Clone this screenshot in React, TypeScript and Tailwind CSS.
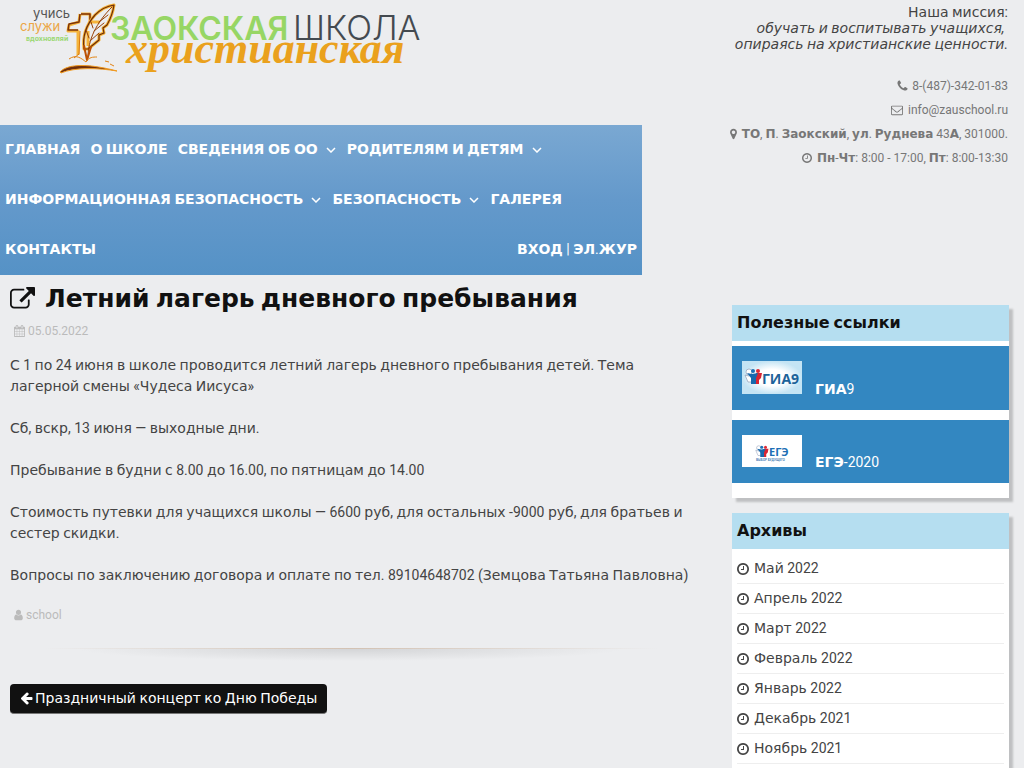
import type { ReactNode } from "react";

// Font Awesome 4 outlines, drawn on its 1792 unit grid
const icons = {
  phone: {
    box: "128 0 1536 1792",
    d: "M1600 1240q0 27-10 70.5t-21 68.5q-21 50-122 106-94 51-186 51-27 0-53-3.5t-57.5-12.5-47-14.5-55.5-20.5-49-18q-98-35-175-83-127-79-264-216t-216-264q-48-77-83-175-3-9-18-49t-20.5-55.5-14.5-47-12.5-57.5-3.5-53q0-92 51-186 56-101 106-122 25-11 68.5-21t70.5-10q14 0 21 3 18 6 53 76 11 19 30 54t35 63.5 31 53.5q3 4 17.5 25t21.5 35.5 7 28.5q0 20-28.5 50t-62 55-62 53-28.5 46q0 9 5 22.5t8.5 20.5 14 24 11.5 19q76 137 174 235t235 174q2 1 19 11.5t24 14 20.5 8.5 22.5 5q18 0 46-28.5t53-62 55-62 50-28.5q14 0 28.5 7t35.5 21.5 25 17.5q25 15 53.5 31t63.5 35 54 30q70 35 76 53 3 7 3 21z",
  },
  envelope: {
    box: "0 0 1792 1792",
    d: "M1664 1504v-768q-32 36-69 66-268 206-426 338-51 43-83 67t-86.5 48.5-102.5 24.5h-2q-48 0-102.5-24.5t-86.5-48.5-83-67q-158-132-426-338-37-30-69-66v768q0 13 9.5 22.5t22.5 9.5h1472q13 0 22.5-9.5t9.5-22.5zm0-1051v-24.5l-.5-13-3-12.5-5.5-9-9-7.5-14-2.5h-1472q-13 0-22.5 9.5t-9.5 22.5q0 168 147 284 193 152 401 317 6 5 35 29.5t46 37.5 44.5 31.5 50.5 27.5 43 9h2q20 0 43-9t50.5-27.5 44.5-31.5 46-37.5 35-29.5q208-165 401-317 54-43 100.5-115.5t46.5-131.5zm128-37v1088q0 66-47 113t-113 47h-1472q-66 0-113-47t-47-113v-1088q0-66 47-113t113-47h1472q66 0 113 47t47 113z",
  },
  marker: {
    box: "384 0 1024 1792",
    d: "M1152 640q0-106-75-181t-181-75-181 75-75 181 75 181 181 75 181-75 75-181zm256 0q0 109-33 179l-364 774q-16 33-47.5 52t-67.5 19-67.5-19-46.5-52l-365-774q-33-70-33-179 0-212 150-362t362-150 362 150 150 362z",
  },
  clock: {
    box: "128 0 1536 1792",
    d: "M1024 544v448q0 14-9 23t-23 9h-320q-14 0-23-9t-9-23v-64q0-14 9-23t23-9h224v-352q0-14 9-23t23-9h64q14 0 23 9t9 23zm416 352q0-148-73-273t-198-198-273-73-273 73-198 198-73 273 73 273 198 198 273 73 273-73 198-198 73-273zm224 0q0 209-103 385.5t-279.5 279.5-385.5 103-385.5-103-279.5-279.5-103-385.5 103-385.5 279.5-279.5 385.5-103 385.5 103 279.5 279.5 103 385.5z",
  },
  external: {
    box: "0 0 1792 1792",
    d: "M1408 928v320q0 119-84.5 203.5t-203.5 84.5h-832q-119 0-203.5-84.5t-84.5-203.5v-832q0-119 84.5-203.5t203.5-84.5h704q14 0 23 9t9 23v64q0 14-9 23t-23 9h-704q-66 0-113 47t-47 113v832q0 66 47 113t113 47h832q66 0 113-47t47-113v-320q0-14 9-23t23-9h64q14 0 23 9t9 23zm384-864v512q0 26-19 45t-45 19-45-19l-176-176-652 652q-10 10-23 10t-23-10l-114-114q-10-10-10-23t10-23l652-652-176-176q-19-19-19-45t19-45 45-19h512q26 0 45 19t19 45z",
  },
  calendar: {
    box: "64 0 1664 1792",
    d: "M192 1664h288v-288h-288v288zm352 0h320v-288h-320v288zm-352-352h288v-320h-288v320zm352 0h320v-320h-320v320zm-352-384h288v-288h-288v288zm736 736h320v-288h-320v288zm-384-736h320v-288h-320v288zm768 736h288v-288h-288v288zm-384-352h320v-320h-320v320zm-352-864v-288q0-13-9.5-22.5t-22.5-9.5h-64q-13 0-22.5 9.5t-9.5 22.5v288q0 13 9.5 22.5t22.5 9.5h64q13 0 22.5-9.5t9.5-22.5zm736 864h288v-320h-288v320zm-384-384h320v-288h-320v288zm384 0h288v-288h-288v288zm32-480v-288q0-13-9.5-22.5t-22.5-9.5h-64q-13 0-22.5 9.5t-9.5 22.5v288q0 13 9.5 22.5t22.5 9.5h64q13 0 22.5-9.5t9.5-22.5zm384-64v1280q0 52-38 90t-90 38h-1408q-52 0-90-38t-38-90v-1280q0-52 38-90t90-38h128v-96q0-66 47-113t113-47h64q66 0 113 47t47 113v96h384v-96q0-66 47-113t113-47h64q66 0 113 47t47 113v96h128q52 0 90 38t38 90z",
  },
  user: {
    box: "256 0 1280 1792",
    d: "M1536 1399q0 109-62.5 187t-150.5 78h-854q-88 0-150.5-78t-62.5-187q0-85 8.5-160.5t31.5-152 58.5-131 94-89 134.5-34.5q131 128 313 128t313-128q76 0 134.5 34.5t94 89 58.5 131 31.5 152 8.5 160.5zm-256-887q0 159-112.5 271.5t-271.5 112.5-271.5-112.5-112.5-271.5 112.5-271.5 271.5-112.5 271.5 112.5 112.5 271.5z",
  },
  arrow: {
    box: "64 0 1664 1792",
    d: "M1664 896v128q0 53-32.5 90.5t-84.5 37.5h-704l293 294q38 36 38 90t-38 90l-75 76q-37 37-90 37-52 0-91-37l-651-652q-37-37-37-90 0-52 37-91l651-650q38-38 91-38 52 0 90 38l75 74q38 38 38 91t-38 91l-293 293h704q52 0 84.5 37.5t32.5 90.5z",
  },
};

const Icon = ({ name, className }: { name: keyof typeof icons; className: string }) => (
  <svg viewBox={icons[name].box} fill="currentColor" className={`shrink-0 ${className}`} aria-hidden="true">
    <path d={icons[name].d} />
  </svg>
);

// Cyrillic runs are set in DejaVu Sans, digits, spaces and punctuation stay in Roboto
const T = ({ children, bold }: { children: string; bold?: boolean }) => (
  <span>
    {children.split(/([А-Яа-яЁё]+)/).map((part, i) =>
      i % 2 ? (
        <span key={i} className={bold ? "font-['DejaVu_Sans'] leading-none font-bold" : "font-['DejaVu_Sans'] leading-none"}>
          {part}
        </span>
      ) : (
        part
      )
    )}
  </span>
);

const menu = [
  { label: "ГЛАВНАЯ" },
  { label: "О ШКОЛЕ" },
  { label: "СВЕДЕНИЯ ОБ ОО", sub: true },
  { label: "РОДИТЕЛЯМ И ДЕТЯМ", sub: true },
  { label: "ИНФОРМАЦИОННАЯ БЕЗОПАСНОСТЬ", sub: true },
  { label: "БЕЗОПАСНОСТЬ", sub: true },
  { label: "ГАЛЕРЕЯ" },
  { label: "КОНТАКТЫ" },
];

const paragraphs = [
  "С 1 по 24 июня в школе проводится летний лагерь дневного пребывания детей. Тема лагерной смены «Чудеса Иисуса»",
  "Сб, вскр, 13 июня — выходные дни.",
  "Пребывание в будни с 8.00 до 16.00, по пятницам до 14.00",
  "Стоимость путевки для учащихся школы — 6600 руб, для остальных -9000 руб, для братьев и сестер скидки.",
  "Вопросы по заключению договора и оплате по тел. 89104648702 (Земцова Татьяна Павловна)",
];

const archives = [
  "Май 2022",
  "Апрель 2022",
  "Март 2022",
  "Февраль 2022",
  "Январь 2022",
  "Декабрь 2021",
  "Ноябрь 2021",
];

const Logo = () => (
  <svg viewBox="0 0 430 80" className="block h-20 w-[430px] max-w-full" role="img" aria-label="Заокская христианская школа">
    <text x="33" y="18" fontSize="13" fill="#555" fontFamily="Inter">учись</text>
    <text x="20" y="31" fontSize="13" fill="#eba544" fontFamily="Inter">служи</text>
    <text x="26" y="41" fontSize="7" fontWeight="700" fill="#9bd873" fontFamily="Inter">вдохновляй</text>
    {/* cross */}
    <g fill="none" strokeLinejoin="round">
      <path d="M81 14h9v8h10M80 14l-1 8-10 3-1 6h10v24M88 31v15" stroke="#f5b43c" strokeWidth="3" />
      <path d="M81 14h9v8M80 14l-1 8-10 2-1 6h10" stroke="#7d3208" strokeWidth="1.5" />
      <path d="M80 31l-1 23-5 4" stroke="#d9780b" strokeWidth="1" />
    </g>
    {/* quill */}
    <g fill="none" strokeLinecap="round" strokeLinejoin="round">
      <path d="M84 49c-2-15 3-25 11-34 6-6 12-9 19-10-1 7-3 13-7 20l-4 3 1 5-5 2v5l-11 9z" stroke="#f6b133" strokeWidth="3" />
      <path d="M84 49c-2-15 3-25 11-34 6-6 12-9 19-10-1 7-3 13-7 20l-4 3 1 5-5 2v5l-11 9z" stroke="#6b2b09" strokeWidth="1.2" />
      <path d="M88 57c0-17 8-34 24-50M90 41l9-8M94 31l10-8M99 22l9-7M89 38l-3-8M93 28l-2-6" stroke="#974008" strokeWidth="1" />
      <path d="M84 46l3 14 4-13" stroke="#bc5205" strokeWidth="2" />
    </g>
    <path d="M69 59c7-5 12-1 17 3 3-5 7-5 11-5M105 61l4 1M110 64l4 2" fill="none" stroke="#e38413" strokeWidth="1" />
    <path d="M60 72c8-9 31-8 57-1-18-3-42-4-56 2z" fill="#71300b" stroke="#f29b21" strokeWidth="1" />
    <text x="110" y="40" fontSize="32" fontWeight="600" fill="#97d665" fontFamily="Inter">ЗАОКСКАЯ</text>
    <text x="293" y="40" fontSize="34" fontWeight="300" fill="#444a50" fontFamily="Inter">ШКОЛА</text>
    <text x="126" y="63" fontSize="44" fontStyle="italic" fontWeight="700" fill="#eaa11d" fontFamily="Liberation Serif">христианская</text>
  </svg>
);

// the two little figures on the exam badges
const People = () => (
  <g>
    <circle cx="5" cy="4" r="3" fill="#fff" stroke="#8090ad" strokeWidth=".6" />
    <path d="M1 7q4 2 7 0l1 7H4z" fill="#fff" stroke="#8090ad" strokeWidth=".6" />
    <circle cx="14" cy="3" r="2" fill="#e02934" />
    <path d="M12 5h6l-1 5-2 2v4h-4z" fill="#d82533" />
    <circle cx="9" cy="3" r="2" fill="#1b70b5" />
    <path d="M3 5l5 1 6-1-2 5v6H7v-6z" fill="#1769ad" />
  </g>
);

const Gia = () => (
  <svg viewBox="0 0 60 33" className="h-[33px] w-[60px]" aria-hidden="true">
    <defs>
      <radialGradient id="gia">
        <stop offset="0.5" stopColor="#fff" />
        <stop offset="1" stopColor="#c4e4f4" />
      </radialGradient>
    </defs>
    <rect width="60" height="33" fill="url(#gia)" />
    <g transform="translate(2 7)">
      <People />
    </g>
    <text x="20" y="23" fontSize="14" fontWeight="700" fill="#1d6399" fontFamily="Open Sans">ГИА9</text>
  </svg>
);

const Ege = () => (
  <svg viewBox="0 0 60 32" className="h-8 w-[60px]" aria-hidden="true">
    <rect width="60" height="32" fill="#fff" />
    <g transform="translate(13 10) scale(.75)">
      <People />
    </g>
    <text x="27" y="21" fontSize="11" fontWeight="700" fill="#1d6fb5" fontFamily="Open Sans">ЕГЭ</text>
    <text x="14" y="26" fontSize="3" fontWeight="700" fill="#4a83b5" fontFamily="Open Sans">ВЫБОР БУДУЩЕГО</text>
  </svg>
);

const Widget = ({ title, children }: { title: string; children: ReactNode }) => (
  <section className="mb-[15px] bg-white shadow-[4px_4px_2px_#bfc0c2]">
    <h3 className="bg-[#b5def0] px-[5px] text-base leading-9 text-[#111]">
      <T bold>{title}</T>
    </h3>
    {children}
  </section>
);

const App = () => {
  return (
    <div className="flex min-h-screen w-full overflow-hidden bg-[#ecedef] font-[Roboto,sans-serif] text-sm text-[#444]">
      {/* Main column */}
      <div className="min-w-0 flex-1">
        <header className="h-[125px]">
          <a href="#" className="inline-block">
            <Logo />
          </a>
        </header>

        <nav className="mr-[88px] flex flex-wrap bg-linear-to-b from-[#7aa8d2] via-[#6499cb] to-[#5592c6] leading-[48px] text-white">
          {menu.map((item) => (
            <a key={item.label} href="#" className="flex items-center px-[5px] pb-[2px] whitespace-nowrap">
              <T bold>{item.label}</T>
              {item.sub && (
                <svg viewBox="0 0 10 6" className="mt-[2px] mr-px ml-2 h-[6px] w-[10px]" fill="none" stroke="currentColor" strokeWidth="1.5">
                  <path d="M1 1l4 4 4-4" />
                </svg>
              )}
            </a>
          ))}
          <a href="#" className="ml-auto px-[5px] pb-[2px] whitespace-nowrap">
            <T bold>ВХОД | ЭЛ.ЖУР</T>
          </a>
        </nav>

        <main className="pr-[38px] pl-[10px]">
          <h1 className="flex items-center gap-[10px] pt-2 text-[25px] leading-8 text-[#111]">
            <Icon name="external" className="h-[25px] w-[25px]" />
            <T bold>Летний лагерь дневного пребывания</T>
          </h1>
          <p className="mt-1 flex h-6 items-center gap-[3px] pl-1 text-xs text-[#bbb]">
            <Icon name="calendar" className="h-3 w-[11px]" />
            05.05.2022
          </p>

          <div className="mt-3 flex flex-col gap-[21px] leading-[21px]">
            {paragraphs.map((text) => (
              <p key={text}>
                <T>{text}</T>
              </p>
            ))}
          </div>

          <p className="mt-[17px] flex h-6 items-center gap-[3px] pl-1 text-xs text-[#bbb]">
            <Icon name="user" className="h-3 w-[9px]" />
            school
          </p>

          {/* Divider with a soft shade under it */}
          <div className="mt-[21px] h-9">
            <div className="h-px bg-linear-to-r from-transparent from-5% via-[#d3c2b3] to-transparent to-95%" />
            <div className="h-3 bg-[radial-gradient(ellipse_40%_100%_at_50%_0%,#d4d5d7,transparent)]" />
          </div>

          <a
            href="#"
            className="inline-flex h-[30px] items-center gap-[2px] rounded border-b border-[#777] bg-[#111] px-[10px] pb-px text-white"
          >
            <Icon name="arrow" className="h-[14px] w-[13px]" />
            <T>Праздничный концерт ко Дню Победы</T>
          </a>
        </main>
      </div>

      {/* Right column */}
      <aside className="w-[294px] shrink-0">
        <div className="flex h-[305px] flex-col items-end pt-1 pr-4 whitespace-nowrap">
          <p className="text-right leading-4">
            <T>Наша миссия:</T>
            <br />
            <em>
              <T>обучать и воспитывать учащихся,</T>&nbsp;
              <br />
              <T>опираясь на христианские ценности.</T>
            </em>
          </p>
          <address className="mt-[22px] flex flex-col items-end text-xs leading-6 text-[#777] not-italic">
            <a href="tel:84873420183" className="flex items-center gap-1">
              <Icon name="phone" className="h-[14px] w-[11px]" />
              8-(487)-342-01-83
            </a>
            <a href="mailto:info@zauschool.ru" className="flex items-center gap-[5px]">
              <Icon name="envelope" className="h-3 w-3" />
              info@zauschool.ru
            </a>
            <span className="flex items-center gap-[5px]">
              <Icon name="marker" className="h-3 w-[7px]" />
              <T bold>ТО, П. Заокский, ул. Руднева 43А, 301000.</T>
            </span>
            <span className="flex items-center gap-[5px]">
              <Icon name="clock" className="h-3 w-[10px]" />
              <T bold>Пн-Чт: 8:00 - 17:00, Пт: 8:00-13:30</T>
            </span>
          </address>
        </div>

        <div className="mr-[15px] ml-[2px]">
          <Widget title="Полезные ссылки">
            <div className="flex flex-col gap-[10px] pt-[5px] pb-[15px] text-white">
              <a href="#" className="flex h-16 items-baseline gap-[13px] bg-[#3387c1] px-[10px] pt-[15px]">
                <Gia />
                <T bold>ГИА9</T>
              </a>
              <a href="#" className="flex h-[63px] items-baseline gap-[13px] bg-[#3387c1] px-[10px] pt-[15px]">
                <Ege />
                <T bold>ЕГЭ-2020</T>
              </a>
            </div>
          </Widget>

          <Widget title="Архивы">
            <ul className="px-[5px] pt-[5px] pb-[15px]">
              {archives.map((month) => (
                <li key={month} className="border-b border-[#eee]">
                  <a href="#" className="flex items-center gap-[5px] leading-[29px]">
                    <Icon name="clock" className="h-[14px] w-3" />
                    <T>{month}</T>
                  </a>
                </li>
              ))}
            </ul>
          </Widget>
        </div>
      </aside>
    </div>
  );
};

export default App;
